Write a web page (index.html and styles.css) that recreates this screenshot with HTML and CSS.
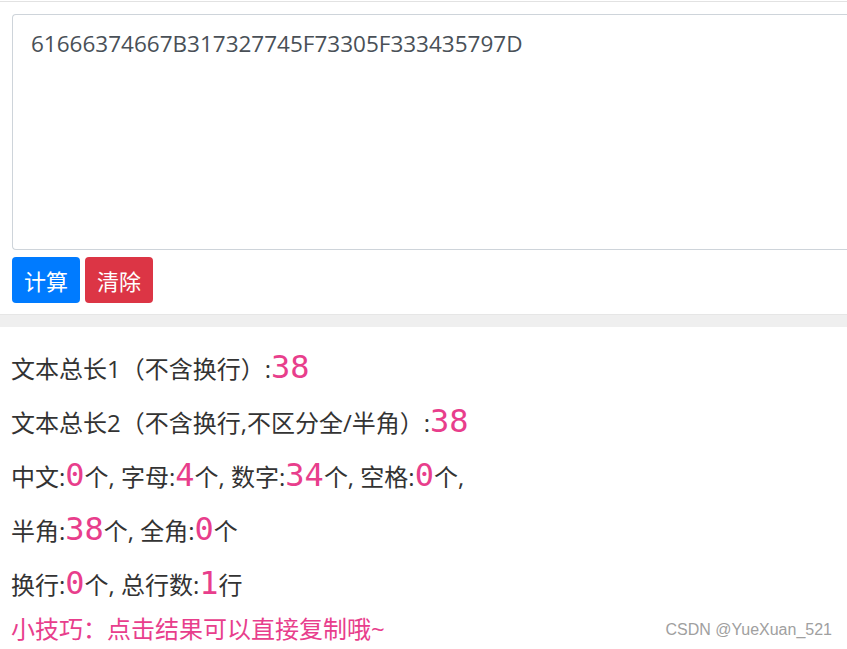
FILE: index.html
```html
<!DOCTYPE html>
<html lang="zh">
<head>
<meta charset="utf-8">
<title>文本长度计算</title>
<link rel="stylesheet" href="styles.css">
</head>
<body>
<div class="topline"></div>
<div class="form">
  <textarea class="input">61666374667B317327745F73305F333435797D</textarea>
  <div class="actions">
    <button class="btn btn-primary">计算</button>
    <button class="btn btn-danger">清除</button>
  </div>
</div>
<div class="band"></div>
<div class="results">
  <div class="row">文本总长1（不含换行）:<span class="num">38</span></div>
  <div class="row">文本总长2（不含换行,不区分全/半角）:<span class="num">38</span></div>
  <div class="row">中文:<span class="num">0</span>个, 字母:<span class="num">4</span>个, 数字:<span class="num">34</span>个, 空格:<span class="num">0</span>个,</div>
  <div class="row">半角:<span class="num">38</span>个, 全角:<span class="num">0</span>个</div>
  <div class="row">换行:<span class="num">0</span>个, 总行数:<span class="num">1</span>行</div>
  <div class="tip">小技巧：点击结果可以直接复制哦~</div>
</div>
<div class="watermark">CSDN @YueXuan_521</div>
</body>
</html>
```
FILE: styles.css
```css
html, body {
  margin: 0;
  padding: 0;
  background: #fff;
  overflow: hidden;
}
body {
  width: 847px;
  height: 649px;
  position: relative;
  font-family: "Open Sans", "Noto Sans CJK SC", sans-serif;
  color: #333;
}
.topline {
  height: 1px;
  margin-top: 1px;
  background: #e2e2e2;
}
.form {
  padding: 12px 0 0 12px;
}
.input {
  display: block;
  box-sizing: border-box;
  width: 835px;
  height: 236px;
  margin: 0;
  padding: 12px 18px;
  border: 1px solid #ced4da;
  border-right: none;
  border-radius: 4px 0 0 4px;
  font-family: "Open Sans", "Noto Sans CJK SC", sans-serif;
  font-size: 22.5px;
  line-height: 33px;
  color: #495057;
  resize: none;
  outline: none;
  overflow: hidden;
}
.actions {
  display: flex;
  gap: 5px;
  margin-top: 7px;
}
.btn {
  box-sizing: border-box;
  height: 46px;
  width: 68px;
  padding: 0;
  border: none;
  border-radius: 4px;
  font-family: "Noto Sans CJK SC", sans-serif;
  font-size: 22px;
  color: #fff;
}
.btn-primary { background: #007bff; }
.btn-danger { background: #dc3545; }
.band {
  height: 13px;
  margin-top: 11px;
  background: #efefef;
  border-top: 1px solid #e6e6e6;
  box-sizing: border-box;
}
.results {
  padding: 15px 0 0 11px;
  font-size: 24px;
}
.row {
  height: 54px;
  line-height: 54px;
  white-space: nowrap;
}
.num {
  font-family: "DejaVu Sans Mono", monospace;
  font-size: 32px;
  color: #e83e8c;
  vertical-align: top;
  line-height: 50px;
}
.tip {
  height: 34px;
  line-height: 34px;
  color: #e83e8c;
}
.watermark {
  position: absolute;
  right: 15px;
  top: 621px;
  font-family: "Liberation Sans", sans-serif;
  font-size: 16px;
  color: #a0a0a0;
}
```
